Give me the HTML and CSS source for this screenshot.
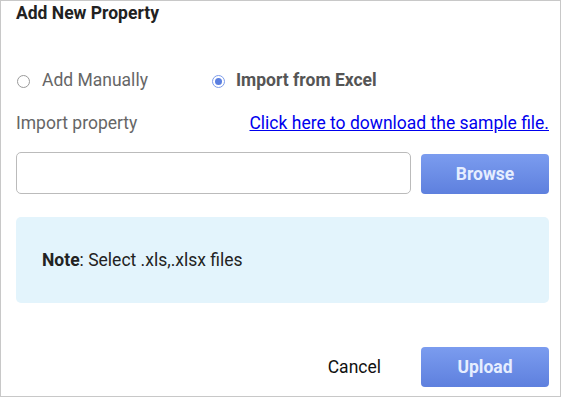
FILE: index.html
```html
<!DOCTYPE html>
<html lang="en">
<head>
  <meta charset="UTF-8">
  <title>Add New Property</title>
  <link rel="stylesheet" href="styles.css">
</head>
<body>
  <div class="dialog">
    <h2 class="title">Add New Property</h2>

    <div class="mode">
      <label class="opt"><span class="radio"></span> Add Manually</label>
      <label class="opt active"><span class="radio"></span> Import from Excel</label>
    </div>

    <div class="import-row">
      <span class="label">Import property</span>
      <a class="sample" href="#">Click here to download the sample file.</a>
    </div>

    <div class="file-row">
      <div class="file-input"></div>
      <button class="btn" type="button">Browse</button>
    </div>

    <div class="note"><b>Note</b>: Select .xls,.xlsx files</div>

    <div class="actions">
      <button class="cancel" type="button">Cancel</button>
      <button class="btn" type="button">Upload</button>
    </div>
  </div>
</body>
</html>
```

FILE: styles.css
```css
body {
  margin: 0;
  font-family: Roboto, "Liberation Sans", sans-serif;
  font-size: 17.5px;
  background: #fff;
  color: #222;
}
.dialog {
  box-sizing: border-box;
  width: 561px;
  height: 397px;
  border: 1px solid #c8c8c8;
  padding: 0 11px 0 15px;
  display: flex;
  flex-direction: column;
}
.title {
  margin: 0;
  font-size: 17.5px;
  line-height: 24px;
  font-weight: 700;
  color: #222;
}
.mode {
  display: flex;
  margin-top: 43px;
  height: 24px;
  align-items: center;
}
.opt {
  display: flex;
  align-items: center;
  color: #666;
  width: 195px;
}
.opt.active {
  font-weight: 700;
  color: #555;
}
.radio {
  box-sizing: border-box;
  width: 13px;
  height: 13px;
  margin: 2px 12px 0 1px;
  border: 1px solid #9a9a9a;
  border-radius: 50%;
  position: relative;
}
.opt.active .radio {
  border-color: #7d9ceb;
  margin-right: 11px;
}
.opt.active .radio::after {
  content: "";
  position: absolute;
  left: 2px;
  top: 2px;
  width: 7px;
  height: 7px;
  border-radius: 50%;
  background: #5b7fe0;
}
.import-row {
  display: flex;
  justify-content: space-between;
  align-items: center;
  margin-top: 19px;
  height: 24px;
}
.label {
  color: #666;
}
.sample {
  color: #00e;
  text-decoration: underline;
}
.file-row {
  display: flex;
  gap: 10px;
  margin-top: 17px;
  align-items: flex-start;
}
.file-input {
  flex: 1;
  box-sizing: border-box;
  height: 42px;
  border: 1px solid #bbb;
  border-radius: 5px;
}
.btn {
  box-sizing: border-box;
  width: 128px;
  height: 40px;
  margin-top: 2px;
  border: none;
  border-radius: 4px;
  background: linear-gradient(#7b9cef, #5e80de);
  color: #e6eeff;
  font-family: Roboto, "Liberation Sans", sans-serif;
  font-size: 17.5px;
  font-weight: 700;
}
.note {
  margin-top: 23px;
  height: 86px;
  box-sizing: border-box;
  padding: 0 26px;
  display: flex;
  align-items: center;
  background: #e3f4fc;
  border-radius: 5px;
  color: #222;
}
.actions {
  display: flex;
  justify-content: flex-end;
  align-items: center;
  margin-top: 44px;
  gap: 40px;
}
.actions .btn {
  margin-top: 0;
}
.cancel {
  background: none;
  border: none;
  padding: 0;
  font-family: Roboto, "Liberation Sans", sans-serif;
  font-size: 17.5px;
  color: #111;
}
```
